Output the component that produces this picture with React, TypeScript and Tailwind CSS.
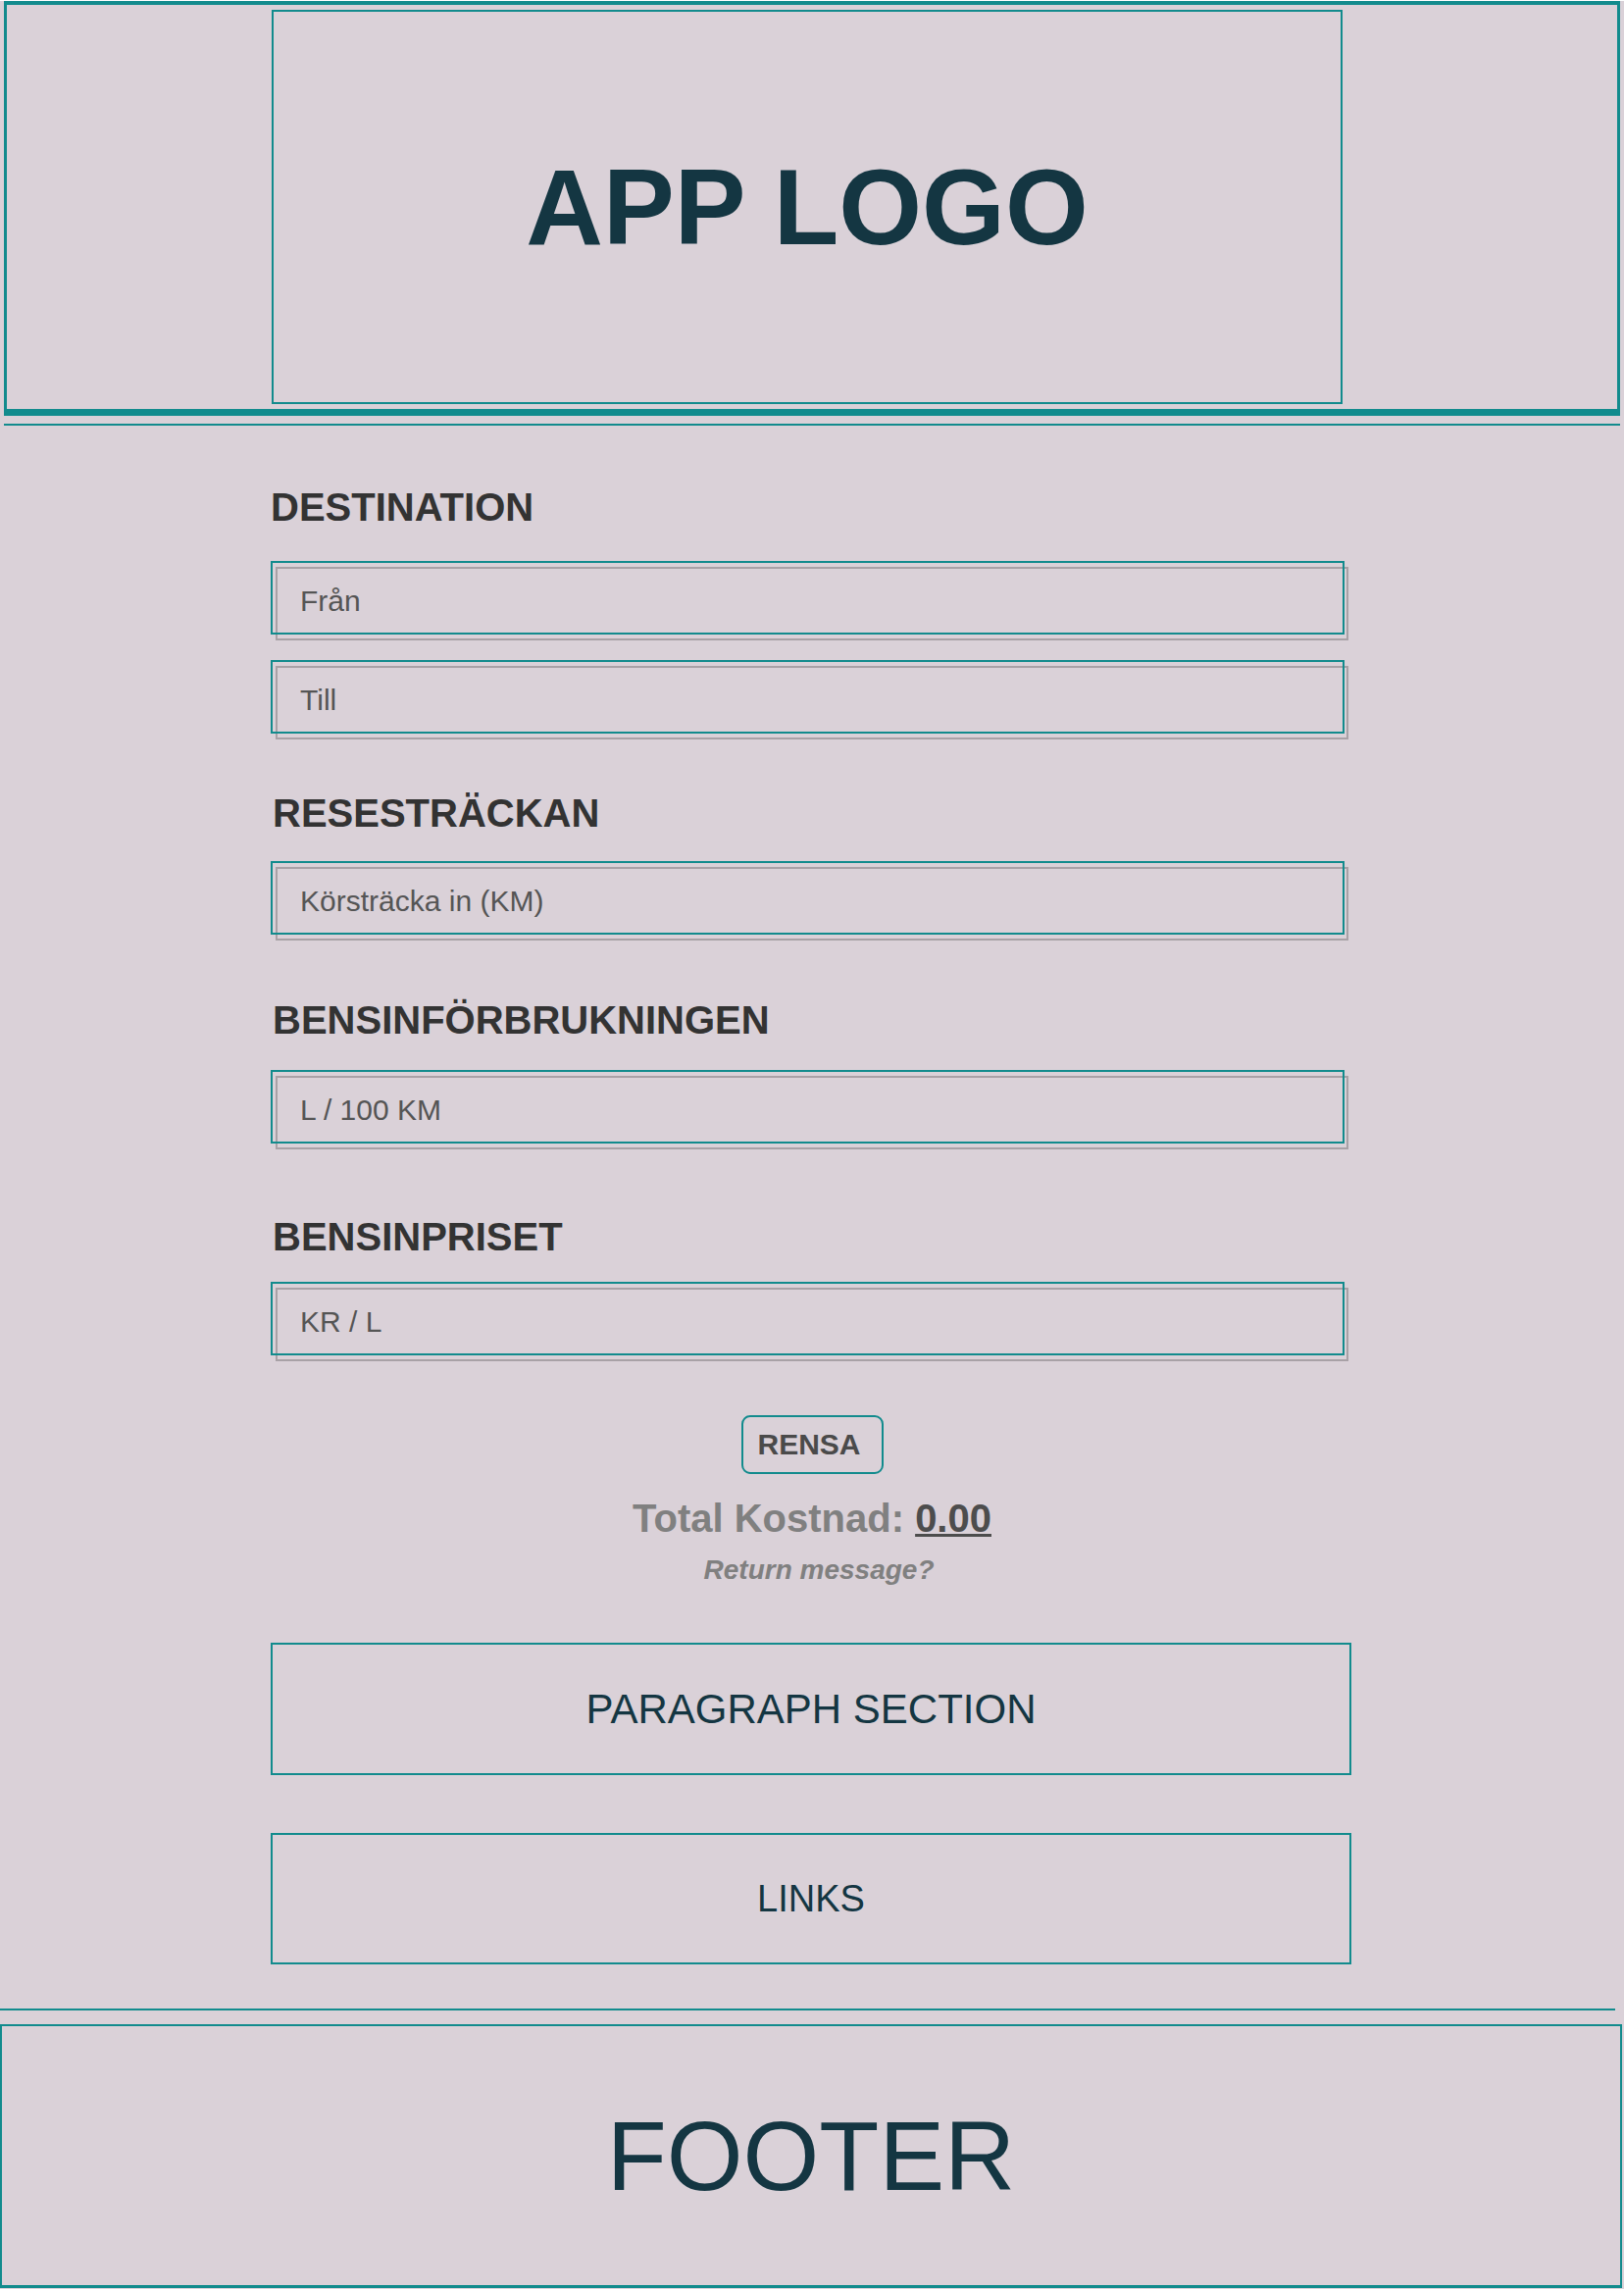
import React from "react";

function Field({ placeholder, className }: { placeholder: string; className: string }) {
  return (
    <div className={className}>
      <div className="relative w-[1095px] h-[75px]">
        <div className="absolute left-[5px] top-[6px] w-[1094px] h-[75px] border-2 border-[#a8a1a6]" />
        <input
          className="relative w-full h-full border-2 border-[#128b8d] bg-transparent pl-[28px] pt-[7px] text-[30px] text-[#555555] placeholder:text-[#555555] outline-none"
          placeholder={placeholder}
        />
      </div>
    </div>
  );
}

export default function App() {
  return (
    <div className="min-h-[2334px] w-full bg-[#dad1d8] font-['Liberation_Sans',Arial,sans-serif] pb-[1px]">
      {/* Header */}
      <header className="mx-[4px] mt-[1px] border-[#128b8d] border-t-4 border-x-[3px] border-b-[7px] pt-[5px] pb-[5px]">
        <div className="ml-[270px] w-[1092px] h-[402px] border-2 border-[#128b8d] flex items-center justify-center">
          <h1 className="text-[109px] font-bold leading-none text-[#143642]">APP LOGO</h1>
        </div>
      </header>
      <div className="mx-[4px] mt-[8px] h-[2px] bg-[#128b8d]" />

      <main className="mx-auto w-[1104px]">
        <h2 className="mt-[63px] text-[40px] font-bold leading-none text-[#333333]">DESTINATION</h2>
        <Field placeholder="Från" className="mt-[35px]" />
        <Field placeholder="Till" className="mt-[26px]" />

        <h2 className="mt-[61px] pl-[2px] text-[40px] font-bold leading-none text-[#333333]">RESESTRÄCKAN</h2>
        <Field placeholder="Körsträcka in (KM)" className="mt-[29px]" />

        <h2 className="mt-[67px] pl-[2px] text-[40px] font-bold leading-none text-[#333333]">BENSINFÖRBRUKNINGEN</h2>
        <Field placeholder="L / 100 KM" className="mt-[31px]" />

        <h2 className="mt-[75px] pl-[2px] text-[40px] font-bold leading-none text-[#333333]">BENSINPRISET</h2>
        <Field placeholder="KR / L" className="mt-[26px]" />

        <div className="flex flex-col items-center">
          <button className="mt-[61px] w-[145px] h-[60px] border-2 border-[#128b8d] rounded-[9px] text-[30px] font-bold leading-none text-[#4a4a4a] pr-[6px]">
            RENSA
          </button>
          <p className="mt-[25px] text-[40px] font-bold leading-none text-[#808080]">
            Total Kostnad: <span className="text-[#4d4d4d] underline decoration-[3px]">0.00</span>
          </p>
          <p className="mt-[19px] pl-[14px] text-[28px] font-bold italic leading-none text-[#808080]">Return message?</p>
        </div>

        <section className="mt-[60px] w-[1102px] h-[135px] border-2 border-[#128b8d] flex items-center justify-center">
          <span className="text-[42px] leading-none text-[#143642]">PARAGRAPH SECTION</span>
        </section>
        <nav className="mt-[59px] w-[1102px] h-[134px] border-2 border-[#128b8d] flex items-center justify-center">
          <span className="text-[38px] leading-none text-[#143642]">LINKS</span>
        </nav>
      </main>

      <div className="mt-[45px] w-[1647px] h-[2px] bg-[#128b8d]" />
      <footer className="mt-[14px] w-[1654px] h-[269px] border-2 border-b-[3px] border-[#128b8d] flex items-center justify-center">
        <span className="text-[100px] leading-none text-[#143642]">FOOTER</span>
      </footer>
    </div>
  );
}
